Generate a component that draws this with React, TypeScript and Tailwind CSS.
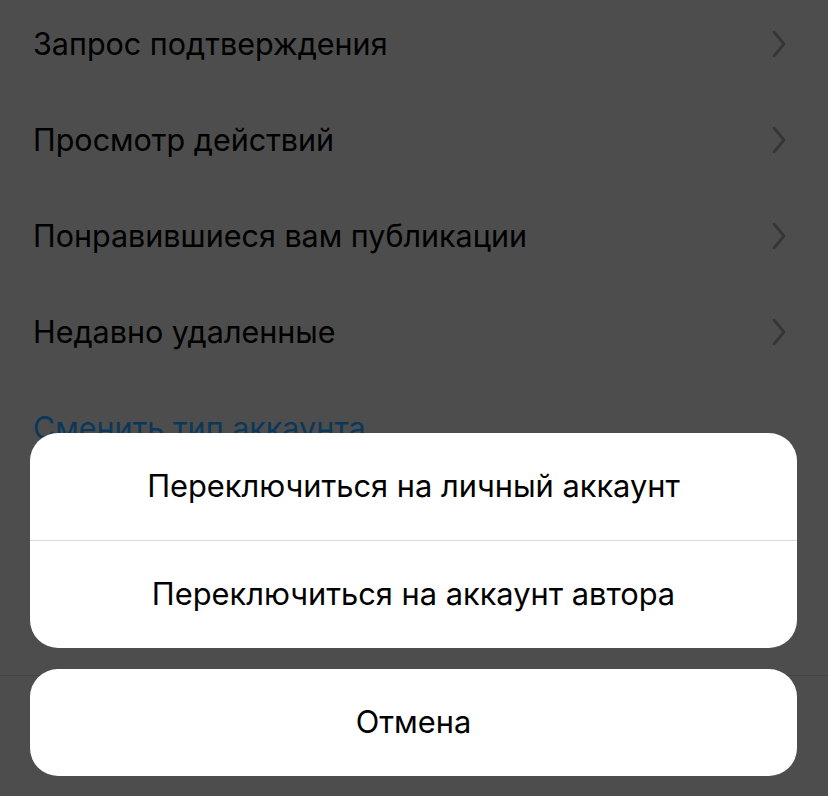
import React from "react";

const Chevron = () => (
  <svg width="14" height="28" viewBox="0 0 14 28" fill="none">
    <path d="M2 2 L12 14 L2 26" stroke="#363636" strokeWidth="2.8" strokeLinecap="round" strokeLinejoin="round" />
  </svg>
);

const rows = [
  "Запрос подтверждения",
  "Просмотр действий",
  "Понравившиеся вам публикации",
  "Недавно удаленные",
];

export default function App() {
  return (
    <div
      className="relative w-[828px] h-[796px] overflow-hidden bg-[#4d4d4d]"
      style={{ fontFamily: "Inter, 'Noto Sans', sans-serif" }}
    >
      <div className="-mt-[4px] flex flex-col">
        {rows.map((r) => (
          <div key={r} className="h-[96px] flex items-center justify-between pl-[33px] pr-[42px]">
            <span className="text-[30.5px] text-black">{r}</span>
            <Chevron />
          </div>
        ))}
        <div className="h-[96px] flex items-center pl-[33px]">
          <span className="text-[30.5px] text-[#0b3859]">Сменить тип аккаунта</span>
        </div>
      </div>
      <div className="absolute left-0 right-0 top-[675px] h-[1px] bg-[#444444]" />

      <div className="absolute left-[30px] right-[31px] top-[433px] flex flex-col gap-[21px]">
        <div className="bg-white rounded-[28px] flex flex-col overflow-hidden">
          <div className="h-[107px] flex items-center justify-center text-[30.8px] text-black">
            Переключиться на личный аккаунт
          </div>
          <div className="h-[1px] bg-[#dbdbdb]" />
          <div className="h-[107px] flex items-center justify-center text-[30.8px] text-black">
            Переключиться на аккаунт автора
          </div>
        </div>
        <div className="bg-white rounded-[28px] h-[107px] flex items-center justify-center text-[30.8px] text-black">
          Отмена
        </div>
      </div>
    </div>
  );
}
